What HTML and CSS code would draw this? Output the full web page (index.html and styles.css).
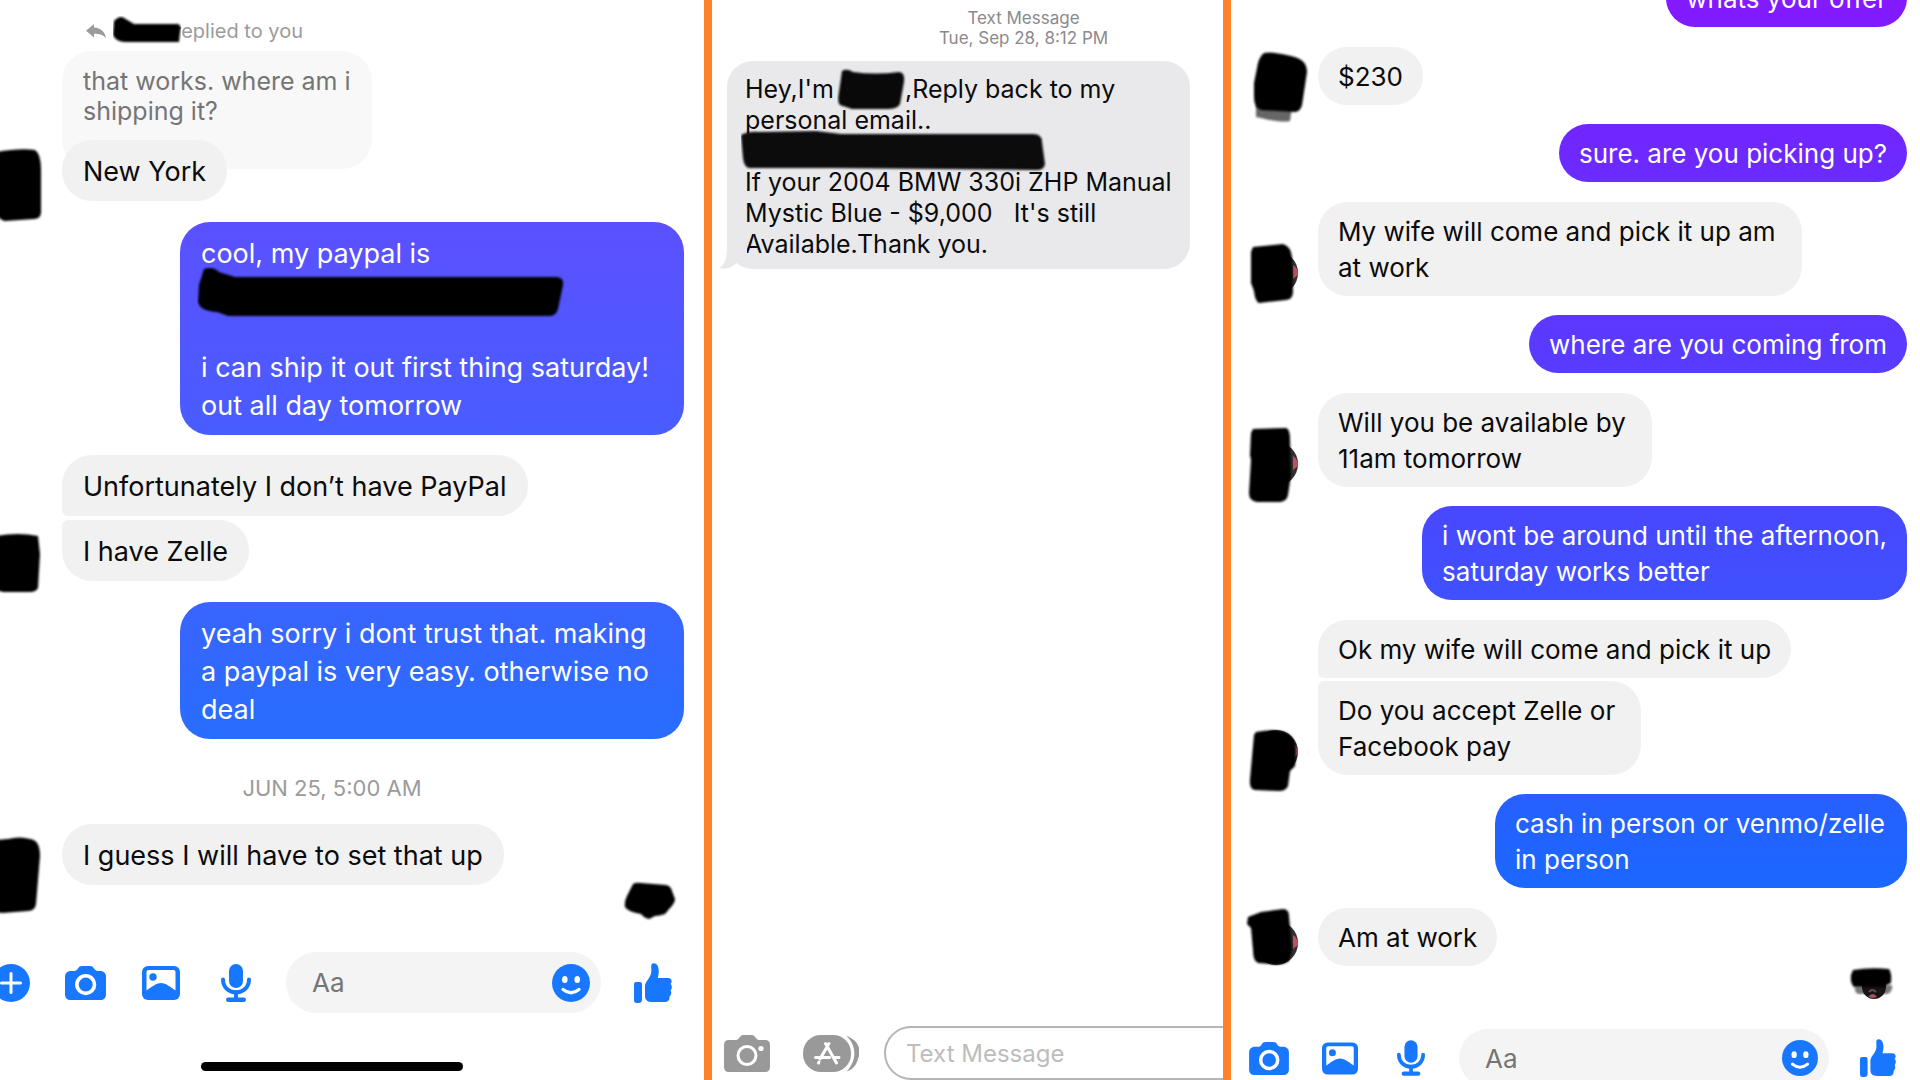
FILE: index.html
```html
<!DOCTYPE html>
<html lang="en">
<head>
    <meta charset="UTF-8">
    <meta name="viewport" content="width=device-width, initial-scale=1.0">
    <title>Messages</title>
    <link rel="stylesheet" href="styles.css">
</head>
<body>
    <svg class="sprite" aria-hidden="true">
        <defs>
            <filter id="soft" x="-10%" y="-10%" width="120%" height="120%">
                <feGaussianBlur stdDeviation="1.2"/>
            </filter>
        </defs>
        <symbol id="plus" viewBox="0 0 38 38">
            <circle cx="19" cy="19" r="19" fill="#1877ff"/>
            <path d="M19 9.500V28.500M9.500 19H28.500" stroke="#fff" stroke-width="3" stroke-linecap="round"/>
        </symbol>
        <symbol id="camera" viewBox="0 0 41 34">
            <path d="M6 5H9C11 5 12 4 13 2.500C14 .8 15 0 17 0H25C27 0 28 .8 29 2.500C30 4 31 5 33 5H35C39 5 41 7.500 41 11V28C41 32 39 34 35 34H6C2 34 0 32 0 28V11C0 7.500 2 5 6 5Z" fill="#1877ff"/>
            <circle cx="20.700" cy="18.600" r="8.800" fill="none" stroke="#fff" stroke-width="3.600"/>
        </symbol>
        <symbol id="photo" viewBox="0 0 38 34">
            <rect width="38" height="34" rx="6" fill="#1877ff"/>
            <path d="M6.500 4H31.500Q33.500 4 33.500 6V24.500C29 21.500 24 17 19 17S9 21.500 4.500 24.500V6Q4.500 4 6.500 4Z" fill="#fff"/>
            <circle cx="11" cy="11" r="3.700" fill="#1877ff"/>
        </symbol>
        <symbol id="mic" viewBox="0 0 30 38">
            <rect x="8" width="14" height="24" rx="7" fill="#1877ff"/>
            <path d="M2 15.500C2 23 7.500 28.300 15 28.300S28 23 28 15.500M15 28V35" fill="none" stroke="#1877ff" stroke-width="4" stroke-linecap="round"/>
            <rect x="5" y="33.500" width="20" height="4.500" rx="2.200" fill="#1877ff"/>
        </symbol>
        <symbol id="smile" viewBox="0 0 38 38">
            <circle cx="19" cy="19" r="19" fill="#1877ff"/>
            <ellipse cx="12.800" cy="15.500" rx="2.800" ry="3.600" fill="#fff"/>
            <ellipse cx="25.200" cy="15.500" rx="2.800" ry="3.600" fill="#fff"/>
            <path d="M11 25.500Q19 32 27 25.500" fill="none" stroke="#fff" stroke-width="3.200" stroke-linecap="round"/>
        </symbol>
        <symbol id="thumb" viewBox="0 0 38 40">
            <path d="M2 19H6Q8 19 8 21V36.500Q8 40 4.500 40H2.500Q0 40 0 37V21Q0 19 2 19Z" fill="#1877ff"/>
            <path d="M17.500 1.500C18.500 -.5 22 -.3 23.500 2.500C25.500 6.500 24.800 11 23.800 15H34C38 15 38.500 19 36.500 21C38.500 22.500 38 26 36.500 27.500C38 29.500 37 32.500 35.500 33.500C36 37 34 39 31 39H18C13.500 39 11 37 11 33V23C11 18.500 16.500 15.500 17.300 9C17.500 6 16.800 3 17.500 1.500Z" fill="#1877ff"/>
        </symbol>
    </svg>

    <main class="board">
        <section class="panel messenger messenger-left">
            <div class="thread">
                <p class="reply-note">
                    <svg class="reply-icon" viewBox="0 0 20 14" aria-hidden="true"><path d="M8 0V3.500C15 4 19 8 20 14C17 10.500 13 9.500 8 9.700V13.500L0 6.700Z" fill="#9b9b9b"/></svg>
                    <span class="hidden-name">
                        <svg class="marker" width="68" height="36" viewBox="0 0 68 36" aria-hidden="true"><path d="M1 5Q7 -1 11 2L21 8H65Q69 9 67 17L66 26H12Q3 26 0 19Z" filter="url(#soft)"/></svg>
                    </span>replied to you
                </p>
                <div class="bubble quoted">that works. where am i<br>shipping it?</div>
                <div class="row overlap">
                    <svg class="avatar" aria-hidden="true"><path d="M-4 12Q20 8 35 10Q41 14 41 30V72Q41 79 34 79L5 81Q0 80 -4 74Z" filter="url(#soft)"/></svg>
                    <div class="bubble">New York</div>
                </div>
                <div class="row sent">
                    <div class="bubble wide tone-violet">cool, my paypal is<br><span class="hidden-email"><svg class="marker" width="368" height="52" viewBox="0 0 368 52" aria-hidden="true"><path d="M7 2Q16 -1 22 5L38 10H360Q367 11 366 18L361 42Q359 49 353 49H31L20 45Q3 44 1 35L2 18Z" filter="url(#soft)"/></svg></span><br><br>i can ship it out first thing saturday!<br>out all day tomorrow</div>
                </div>
                <div class="row">
                    <span class="avatar"></span>
                    <div class="bubble first">Unfortunately I don’t have PayPal</div>
                </div>
                <div class="row stacked">
                    <svg class="avatar" aria-hidden="true"><path d="M-4 16Q18 12 38 16L40 34L38 68Q36 72 30 72H3L-4 70Z" filter="url(#soft)"/></svg>
                    <div class="bubble last">I have Zelle</div>
                </div>
                <div class="row sent">
                    <div class="bubble wide tone-blue">yeah sorry i dont trust that. making<br>a paypal is very easy. otherwise no<br>deal</div>
                </div>
                <p class="date">JUN 25, 5:00 AM</p>
                <div class="row joined">
                    <svg class="avatar" aria-hidden="true"><path d="M-4 16L8 15Q20 12 30 15Q40 16 40 32L36 80Q35 87 28 87L2 89L-4 88Z" filter="url(#soft)"/></svg>
                    <div class="bubble">I guess I will have to set that up</div>
                </div>
                <svg class="seen" width="52" height="38" viewBox="0 0 52 38" aria-hidden="true"><path d="M9 2Q12 0 17 1L42 3Q47 4 48 9L51 17Q51 21 46 26L41 32Q35 34 31 34L25 37Q20 36 17 32Q4 30 1 25Q0 19 4 12Z" filter="url(#soft)"/></svg>
            </div>
            <form class="composer">
                <button type="button" class="tool" aria-label="More"><svg width="38" height="38"><use href="#plus"/></svg></button>
                <button type="button" class="tool" aria-label="Camera"><svg width="41" height="34"><use href="#camera"/></svg></button>
                <button type="button" class="tool" aria-label="Photos"><svg width="38" height="34"><use href="#photo"/></svg></button>
                <button type="button" class="tool" aria-label="Voice message"><svg width="30" height="38"><use href="#mic"/></svg></button>
                <div class="field">
                    <input type="text" placeholder="Aa" aria-label="Message">
                    <button type="button" aria-label="Emoji"><svg width="38" height="38"><use href="#smile"/></svg></button>
                </div>
                <button type="button" class="like" aria-label="Like"><svg width="38" height="40"><use href="#thumb"/></svg></button>
            </form>
            <div class="home-bar"></div>
        </section>

        <section class="panel sms">
            <div class="sms-thread">
                <p class="stamp">Text Message<br>Tue, Sep 28, 8:12 PM</p>
                <div class="sms-bubble">
                    <svg class="tail" width="28" height="26" viewBox="0 0 28 26" aria-hidden="true"><path d="M8 0C8 14 7 21 0 25C8 27 14 24 17 20L28 10V0Z" fill="#e9e9eb"/></svg>
                    Hey,I'm <span class="hidden-first"><svg class="marker" width="70" height="44" viewBox="0 0 70 44" aria-hidden="true"><path d="M5 3Q10 0 16 4Q38 7 62 4Q68 4 67 14L63 36Q61 41 50 41H15L3 37Q0 34 2 24Z" fill-opacity=".96" filter="url(#soft)"/></svg></span>,Reply back to my<br>
                    personal email..<br>
                    <span class="hidden-email"><svg class="marker" width="306" height="42" viewBox="0 0 306 42" aria-hidden="true"><path d="M0 5Q8 1 18 2L75 1L100 4H292Q301 4 301 12L304 34Q303 40 296 40L90 38L8 38Q3 37 2 28Z" fill-opacity=".95" filter="url(#soft)"/></svg></span><br>
                    If your 2004 BMW 330i ZHP Manual<br>
                    Mystic Blue - $9,000 &nbsp; It's still<br>
                    Available.Thank you.
                </div>
            </div>
            <form class="sms-composer">
                <button type="button" aria-label="Camera">
                    <svg width="46" height="37" viewBox="0 0 46 37">
                        <path d="M5 5H12C14 5 14.500 3.500 16 2Q17 0 19 0H28Q30 0 31 2C32.500 3.500 33 5 35 5H41Q46 5 46 10V32Q46 37 41 37H5Q0 37 0 32V10Q0 5 5 5Z" fill="#999"/>
                        <circle cx="23" cy="20.500" r="9" fill="none" stroke="#fff" stroke-width="3"/>
                        <circle cx="37" cy="13.500" r="2.600" fill="#fff"/>
                    </svg>
                </button>
                <button type="button" aria-label="Apps">
                    <svg width="56" height="37" viewBox="0 0 56 37">
                        <rect width="48" height="37" rx="18" fill="#999"/>
                        <path d="M43.500 1C55 5 59 14 55 24C53 31 49 35 43.500 36.500C54 26 54 11 43.500 1Z" fill="#999"/>
                        <path d="M26 8.500L17 24M22.500 8.500L33.500 28M12.500 22.500H26.500M31 22.500H36M16 27L15.500 28" stroke="#fff" stroke-width="3" stroke-linecap="round"/>
                    </svg>
                </button>
                <input type="text" placeholder="Text Message" aria-label="Text Message">
            </form>
        </section>

        <section class="panel messenger messenger-right">
            <div class="thread">
                <div class="row sent">
                    <div class="bubble tone-purple">whats your offer</div>
                </div>
                <div class="row">
                    <svg class="avatar" aria-hidden="true"><path d="M25 58L61 60L59 74Q50 76 25 70Z" fill-opacity=".6" filter="url(#soft)"/><path d="M33 6Q40 4 60 9Q76 12 76 25L71 58Q69 65 64 65L30 63Q23 61 23 50V36L27 16Q29 9 33 6Z" filter="url(#soft)"/></svg>
                    <div class="bubble">$230</div>
                </div>
                <div class="row sent">
                    <div class="bubble tone-indigo">sure. are you picking up?</div>
                </div>
                <div class="row">
                    <svg class="avatar" aria-hidden="true"><circle cx="45" cy="35" r="22" fill="#343034"/><path d="M62 27Q67 30 67 37L62 41Z" fill="#c0525f"/><path d="M22 9L52 6Q60 8 61 20L62 54Q62 61 55 62L28 65Q24 63 23 53L20 45V14Z" filter="url(#soft)"/></svg>
                    <div class="bubble wrapped">My wife will come and pick it up am<br>at work</div>
                </div>
                <div class="row sent">
                    <div class="bubble tone-iris">where are you coming from</div>
                </div>
                <div class="row">
                    <svg class="avatar" aria-hidden="true"><circle cx="45" cy="35" r="22" fill="#343034"/><path d="M62 27Q67 30 67 37L62 41Z" fill="#c0525f"/><path d="M22 0L55 -1Q59 0 59 10L60 46L57 66Q56 72 49 73L26 73Q18 72 18 64L20 31L19 26L20 4Z" filter="url(#soft)"/></svg>
                    <div class="bubble wrapped">Will you be available by<br>11am tomorrow</div>
                </div>
                <div class="row sent">
                    <div class="bubble tone-royal">i wont be around until the afternoon,<br>saturday works better</div>
                </div>
                <div class="row">
                    <span class="avatar"></span>
                    <div class="bubble first">Ok my wife will come and pick it up</div>
                </div>
                <div class="row stacked">
                    <svg class="avatar" aria-hidden="true"><circle cx="45" cy="35" r="22" fill="#343034"/><path d="M62 27Q67 30 67 37L62 41Z" fill="#c0525f"/><path d="M25 15Q45 11 56 16Q65 21 65 34L64 49L59 54L57 69Q55 74 48 74L24 73Q18 72 19 62L23 18Z" filter="url(#soft)"/></svg>
                    <div class="bubble last wrapped">Do you accept Zelle or<br>Facebook pay</div>
                </div>
                <div class="row sent">
                    <div class="bubble wide tone-azure">cash in person or venmo/zelle<br>in person</div>
                </div>
                <div class="row">
                    <svg class="avatar" aria-hidden="true"><circle cx="45" cy="35" r="22" fill="#343034"/><path d="M62 27Q67 30 67 37L62 41Z" fill="#c0525f"/><path d="M17 9L30 4L52 1Q58 1 58 8L61 42L58 53Q50 58 40 56L27 55Q22 53 22 42L20 20L16 16Z" filter="url(#soft)"/></svg>
                    <div class="bubble">Am at work</div>
                </div>
                <svg class="seen" width="44" height="34" viewBox="0 0 44 34" aria-hidden="true"><path d="M5 20L42 18Q43 24 38 27L8 27Q4 25 5 20Z" fill="#777" filter="url(#soft)"/><circle cx="24" cy="20" r="12" fill="#181416"/><path d="M3 3Q20 0 39 2Q42 6 41 16L33 20H4Q0 16 1 8Z" filter="url(#soft)"/><path d="M18 30Q23 24 27 30L23 31Z" fill="#a6545a"/><path d="M19 25Q22 21 26 25" stroke="#665052" stroke-width="2" fill="none"/></svg>
            </div>
            <form class="composer">
                <button type="button" class="tool" aria-label="Camera"><svg width="40" height="33"><use href="#camera"/></svg></button>
                <button type="button" class="tool" aria-label="Photos"><svg width="36" height="33"><use href="#photo"/></svg></button>
                <button type="button" class="tool" aria-label="Voice message"><svg width="28" height="36"><use href="#mic"/></svg></button>
                <div class="field">
                    <input type="text" placeholder="Aa" aria-label="Message">
                    <button type="button" aria-label="Emoji"><svg width="36" height="36"><use href="#smile"/></svg></button>
                </div>
                <button type="button" class="like" aria-label="Like"><svg width="36" height="38"><use href="#thumb"/></svg></button>
            </form>
        </section>
    </main>
</body>
</html>
```
FILE: styles.css
```css
* {
    box-sizing: border-box;
}
body {
    margin: 0;
    font-family: Inter, Roboto, "Liberation Sans", sans-serif;
    color: #0b0b0b;
}
p {
    margin: 0;
}
svg {
    display: block;
}
button {
    display: flex;
    align-items: center;
    justify-content: center;
    padding: 0;
    border: none;
    background: none;
    cursor: pointer;
}
input {
    border: none;
    outline: none;
    background: none;
    font-family: inherit;
}
.sprite {
    position: absolute;
    width: 0;
    height: 0;
}

/* three phone screens split by orange rules */
.board {
    display: grid;
    grid-template-columns: 704fr 511fr 689fr;
    gap: 8px;
    height: 100vh;
    background-color: #ff8129;
}
.panel {
    display: flex;
    flex-direction: column;
    min-width: 0;
    overflow: hidden;
    background-color: #fff;
}
.thread {
    flex: 1;
    display: flex;
    flex-direction: column;
}

/* messenger rows */
.row {
    display: flex;
    align-items: flex-end;
    margin-top: 20px;
}
.row.sent {
    justify-content: flex-end;
}
.row.stacked {
    margin-top: 4px;
}
.row.overlap {
    margin-top: -29px;
}
.row.joined {
    margin-top: 0;
}
.avatar {
    flex: none;
    overflow: visible;
}
.bubble {
    background-color: #f1f1f1;
    border-radius: 30px;
    white-space: nowrap;
}
.bubble.first {
    border-bottom-left-radius: 6px;
}
.bubble.last {
    border-top-left-radius: 6px;
}
.sent .bubble {
    color: #fff;
}
.tone-violet { background: linear-gradient(#5b50ff, #485dff); }
.tone-blue { background: linear-gradient(#3a64ff, #286dff); }
.tone-purple { background: linear-gradient(#8816ff, #7f1cff); }
.tone-indigo { background: linear-gradient(#7225ff, #6a2cff); }
.tone-iris { background: linear-gradient(#5e37ff, #573cff); }
.tone-royal { background: linear-gradient(#4947ff, #3f51ff); }
.tone-azure { background: linear-gradient(#285fff, #1a68ff); }

.messenger-left .bubble {
    padding: 13px 21px 10px;
    font-size: 27px;
    line-height: 38px;
}
.messenger-left .bubble.wide {
    min-width: 504px;
}
.messenger-left .avatar {
    width: 62px;
    height: 61px;
}
.messenger-left .sent {
    margin-top: 21px;
    padding-right: 20px;
}
.messenger-left .bubble.quoted {
    align-self: flex-start;
    height: 118px;
    margin-left: 62px;
    padding-top: 15px;
    background-color: #f8f8f8;
    color: #757575;
    font-size: 25px;
    line-height: 30px;
}
.reply-note {
    display: flex;
    align-items: center;
    height: 51px;
    padding: 11px 0 0 86px;
    font-size: 20px;
    color: #9b9b9b;
}
.reply-icon {
    width: 20px;
    height: 14px;
    margin-right: 8px;
}
.date {
    padding: 13px 40px 0 0;
    font-size: 22px;
    line-height: 72px;
    text-align: center;
    color: #9b9b9b;
}

/* marker strokes over private details */
.hidden-name, .hidden-first, .hidden-email {
    position: relative;
    display: inline-block;
    height: 20px;
}
.hidden-name {
    width: 60px;
}
.hidden-first {
    width: 64px;
}
.hidden-email {
    width: 300px;
}
.marker {
    position: absolute;
    left: -4px;
    top: -14px;
}
.hidden-name .marker {
    left: -1px;
    top: -5px;
}
.sms-bubble .marker {
    top: -10px;
}
.seen {
    align-self: flex-end;
    overflow: visible;
}
.messenger-left .seen {
    margin: -3px 28px 0 0;
}

/* composer */
.composer {
    display: flex;
    align-items: center;
    flex: none;
}
.tool {
    flex: none;
}
.field {
    flex: 1;
    display: flex;
    align-items: center;
    min-width: 0;
    margin-left: 13px;
    padding: 0 11px 0 26px;
    border-radius: 31px;
    background-color: #f4f4f4;
}
.field input {
    flex: 1;
    min-width: 0;
    padding: 0;
    font-size: 26px;
}
.field input::placeholder {
    color: #757575;
}
.messenger-left .composer {
    margin-left: -27px;
}
.messenger-left .tool {
    width: 75px;
}
.messenger-left .field {
    height: 61px;
}
.messenger-left .like {
    margin: 0 32px 0 33px;
}
.home-bar {
    width: 262px;
    height: 9px;
    margin: 49px 0 9px 201px;
    border-radius: 5px;
    background-color: #000;
}

/* right screen is scrolled, its first bubble is cut by the top edge */
.messenger-right .thread {
    margin-top: -51px;
}
.messenger-right .bubble {
    padding: 12px 20px 10px;
    font-size: 26px;
    line-height: 36px;
}
.messenger-right .bubble.wrapped {
    padding-right: 26px;
}
.messenger-right .bubble.wide {
    min-width: 412px;
}
.messenger-right .avatar {
    width: 87px;
    height: 58px;
}
.messenger-right .sent {
    margin-top: 19px;
    padding-right: 13px;
}
.messenger-right .row:first-child {
    margin-top: 20px;
}
.messenger-right .stacked {
    margin-top: 3px;
}
.messenger-right .seen {
    margin: 1px 26px 0 0;
}
.messenger-right .composer {
    margin-bottom: -7px;
    padding-left: 2px;
}
.messenger-right .tool {
    width: 71px;
}
.messenger-right .field {
    height: 58px;
}
.messenger-right .like {
    margin: 0 24px 0 31px;
}

/* sms screen */
.sms-thread {
    flex: 1;
    padding: 8px 33px 0 15px;
}
.stamp {
    margin-right: -130px;
    font-size: 17px;
    line-height: 20px;
    text-align: center;
    color: #8a8a8e;
}
.sms-bubble {
    position: relative;
    margin-top: 13px;
    padding: 13px 18px 9px;
    border-radius: 26px;
    background-color: #e9e9eb;
    font-size: 25px;
    line-height: 31px;
    white-space: nowrap;
}
.tail {
    position: absolute;
    left: -8px;
    bottom: 0;
}
.sms-composer {
    display: flex;
    align-items: center;
    flex: none;
    gap: 33px;
    padding-left: 12px;
}
.sms-composer button {
    flex: none;
}
.sms-composer input {
    flex: 1;
    min-width: 0;
    height: 54px;
    margin: 0 -30px 0 -8px;
    padding: 0 20px;
    border: 2px solid #b5b5b5;
    border-radius: 27px;
    font-size: 24px;
}
.sms-composer input::placeholder {
    color: #bdbdbd;
}
```
